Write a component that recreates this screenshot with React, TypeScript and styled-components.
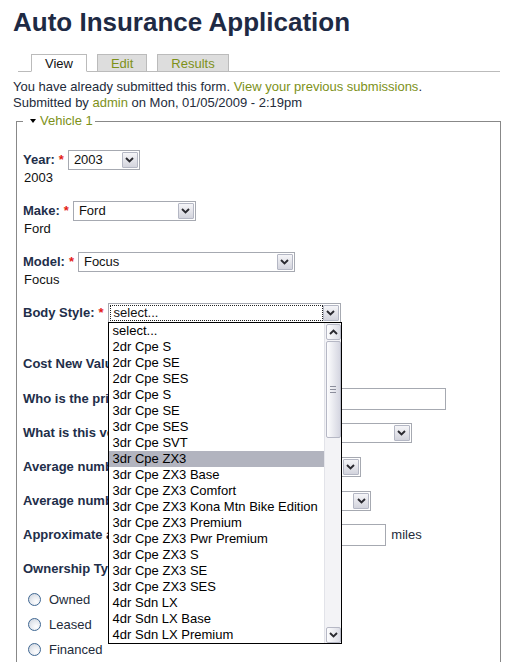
import styled, { createGlobalStyle } from "styled-components";

const GlobalStyle = createGlobalStyle`
  html, body {
    margin: 0;
    padding: 0;
    background: #fff;
    overflow: hidden;
  }
  body {
    font-family: "Liberation Sans", Arial, sans-serif;
    font-size: 13px;
    color: #232b3a;
  }
  * {
    box-sizing: border-box;
  }
`;

const Page = styled.div`
  width: 517px;
  height: 662px;
  overflow: hidden;
  padding: 0 16px 0 13px;
`;

const Title = styled.h1`
  margin: 0;
  padding-top: 7px;
  font-size: 26px;
  line-height: 30px;
  font-weight: bold;
  color: #1e2a44;
`;

const Tabs = styled.ul`
  display: flex;
  gap: 10px;
  margin: 17px 0 0 5px;
  padding: 0 0 0 13px;
  list-style: none;
  border-bottom: 1px solid #bbb;
  width: 482px;
`;

const Tab = styled.li<{ $active?: boolean }>`
  height: 18px;
  margin-bottom: -1px;
  padding: 0 13px;
  line-height: 17px;
  border: 1px solid #bbb;
  border-bottom: 1px solid ${(p) => (p.$active ? "#fff" : "#bbb")};
  background: ${(p) => (p.$active ? "#fff" : "#ddd")};
  color: ${(p) => (p.$active ? "#111" : "#7d9119")};
`;

const Messages = styled.div`
  margin-top: 7px;
  line-height: 16px;
`;

const Link = styled.a`
  color: #7d9119;
  text-decoration: none;
`;

const Fieldset = styled.fieldset`
  margin: 2px 0 0 3px;
  padding: 0 6px 0 6px;
  border: 1px solid #888;
  min-width: 0;
`;

const Legend = styled.legend`
  padding: 0 2px 0 7px;
  line-height: 16px;
  color: #7d9119;
  display: flex;
  align-items: center;
`;

const Caret = styled.span`
  width: 0;
  height: 0;
  margin-right: 4px;
  border-left: 3.5px solid transparent;
  border-right: 3.5px solid transparent;
  border-top: 4px solid #000;
`;

const Fields = styled.div`
  padding-top: 20px;
`;

const FieldBlock = styled.div<{ $gap?: number }>`
  margin-bottom: ${(p) => p.$gap ?? 13}px;
`;

const Row = styled.div`
  display: flex;
  align-items: center;
  height: 21px;
  white-space: nowrap;
`;

const Label = styled.label`
  font-weight: bold;
  color: #222e49;
`;

const Req = styled.span`
  margin-left: 4px;
  color: #e41b17;
  font-weight: bold;
`;

const Value = styled.div`
  height: 16px;
  line-height: 16px;
  padding-left: 1px;
  color: #111;
`;

const SelectWrap = styled.div`
  position: relative;
  margin-left: 4px;
`;

const SelectBox = styled.div<{ $w: number }>`
  display: flex;
  width: ${(p) => p.$w}px;
  height: 20px;
  padding: 1px;
  border: 1px solid #a6a9b1;
  background: #fff;
`;

const SelectText = styled.span<{ $focus?: boolean }>`
  flex: 1;
  padding-left: 4px;
  line-height: 16px;
  color: #111;
  outline: ${(p) => (p.$focus ? "1px dotted #222" : "none")};
  outline-offset: -1px;
`;

const ArrowButton = styled.span`
  width: 16px;
  display: flex;
  align-items: center;
  justify-content: center;
  border: 1px solid #b4b7c4;
  border-radius: 1px;
  background: linear-gradient(#f5f5f8, #d3d4dd);
`;

const TextInput = styled.div<{ $w: number }>`
  width: ${(p) => p.$w}px;
  height: 22px;
  margin-left: 4px;
  border: 1px solid #a6a9b1;
  background: #fff;
`;

const Suffix = styled.span`
  margin-left: 5px;
  color: #232b3a;
`;

const Radios = styled.div`
  margin-top: 8px;
`;

const RadioRow = styled.label`
  display: flex;
  align-items: center;
  height: 25px;
  padding-left: 5px;
  color: #232b3a;
`;

const RadioDot = styled.span`
  width: 13px;
  height: 13px;
  margin-right: 8px;
  border-radius: 50%;
  border: 1px solid #3f6792;
  background: radial-gradient(circle at 65% 70%, #fdfdfe 0%, #e9ecf1 45%, #c9d0da 100%);
`;

const ListBox = styled.div`
  position: absolute;
  left: 0;
  top: 19px;
  z-index: 10;
  display: flex;
  width: 234px;
  height: 322px;
  border: 1px solid #000;
  background: #fff;
`;

const Options = styled.ul`
  flex: 1;
  margin: 0;
  padding: 0;
  list-style: none;
  overflow: hidden;
`;

const Option = styled.li<{ $active?: boolean }>`
  height: 16px;
  line-height: 16px;
  padding-left: 4px;
  white-space: nowrap;
  color: #000;
  background: ${(p) => (p.$active ? "#b2b4bf" : "transparent")};
`;

const ScrollBar = styled.div`
  width: 17px;
  display: flex;
  flex-direction: column;
  padding: 1px 0 0 1px;
  border-left: 1px solid #e2e3e9;
  background: #f3f3f6;
`;

const ScrollButton = styled.span`
  width: 15px;
  height: 16px;
  display: flex;
  align-items: center;
  justify-content: center;
  border: 1px solid #b6b8c5;
  border-radius: 2px;
  background: linear-gradient(90deg, #fdfdfe, #dcdde6);
`;

const Thumb = styled.span`
  width: 15px;
  height: 97px;
  margin-top: 1px;
  display: flex;
  flex-direction: column;
  align-items: center;
  justify-content: center;
  gap: 2px;
  border: 1px solid #b6b8c5;
  border-radius: 2px;
  background: linear-gradient(90deg, #fdfdfe, #d5d6e1);
`;

const Grip = styled.span`
  width: 6px;
  height: 1px;
  background: #8c8e9c;
`;

const TrackFill = styled.span`
  flex: 1;
`;

function Chevron({ up }: { up?: boolean }) {
  return (
    <svg width="9" height="6" viewBox="0 0 9 6">
      <path
        d={up ? "M1 5 L4.5 1.5 L8 5" : "M1 1 L4.5 4.5 L8 1"}
        fill="none"
        stroke="#2a2a30"
        strokeWidth="1.9"
      />
    </svg>
  );
}

function Select({ width, value, focus, children }: { width: number; value: string; focus?: boolean; children?: React.ReactNode }) {
  return (
    <SelectWrap>
      <SelectBox $w={width}>
        <SelectText $focus={focus}>{value}</SelectText>
        <ArrowButton>
          <Chevron />
        </ArrowButton>
      </SelectBox>
      {children}
    </SelectWrap>
  );
}

const bodyStyles = [
  "select...",
  "2dr Cpe S",
  "2dr Cpe SE",
  "2dr Cpe SES",
  "3dr Cpe S",
  "3dr Cpe SE",
  "3dr Cpe SES",
  "3dr Cpe SVT",
  "3dr Cpe ZX3",
  "3dr Cpe ZX3 Base",
  "3dr Cpe ZX3 Comfort",
  "3dr Cpe ZX3 Kona Mtn Bike Edition",
  "3dr Cpe ZX3 Premium",
  "3dr Cpe ZX3 Pwr Premium",
  "3dr Cpe ZX3 S",
  "3dr Cpe ZX3 SE",
  "3dr Cpe ZX3 SES",
  "4dr Sdn LX",
  "4dr Sdn LX Base",
  "4dr Sdn LX Premium",
];

export default function App() {
  return (
    <Page>
      <GlobalStyle />
      <Title>Auto Insurance Application</Title>
      <Tabs>
        <Tab $active>View</Tab>
        <Tab>Edit</Tab>
        <Tab>Results</Tab>
      </Tabs>
      <Messages>
        <div>
          You have already submitted this form. <Link href="#">View your previous submissions</Link>.
        </div>
        <div>
          Submitted by <Link href="#">admin</Link> on Mon, 01/05/2009 - 2:19pm
        </div>
      </Messages>
      <Fieldset>
        <Legend>
          <Caret />
          Vehicle 1
        </Legend>
        <Fields>
          <FieldBlock $gap={14}>
            <Row>
              <Label>Year:</Label>
              <Req>*</Req>
              <Select width={72} value="2003" />
            </Row>
            <Value>2003</Value>
          </FieldBlock>
          <FieldBlock $gap={14}>
            <Row>
              <Label>Make:</Label>
              <Req>*</Req>
              <Select width={123} value="Ford" />
            </Row>
            <Value>Ford</Value>
          </FieldBlock>
          <FieldBlock $gap={14}>
            <Row>
              <Label>Model:</Label>
              <Req>*</Req>
              <Select width={217} value="Focus" />
            </Row>
            <Value>Focus</Value>
          </FieldBlock>
          <FieldBlock $gap={14}>
            <Row>
              <Label>Body Style:</Label>
              <Req>*</Req>
              <Select width={233} value="select..." focus>
                <ListBox>
                  <Options>
                    {bodyStyles.map((s) => (
                      <Option key={s} $active={s === "3dr Cpe ZX3"}>
                        {s}
                      </Option>
                    ))}
                  </Options>
                  <ScrollBar>
                    <ScrollButton>
                      <Chevron up />
                    </ScrollButton>
                    <Thumb>
                      <Grip />
                      <Grip />
                      <Grip />
                    </Thumb>
                    <TrackFill />
                    <ScrollButton>
                      <Chevron />
                    </ScrollButton>
                  </ScrollBar>
                </ListBox>
              </Select>
            </Row>
            <Value />
          </FieldBlock>
          <FieldBlock $gap={14}>
            <Row>
              <Label>Cost New Value:</Label>
              <TextInput $w={100} />
            </Row>
          </FieldBlock>
          <FieldBlock>
            <Row>
              <Label>Who is the primary driver:</Label>
              <TextInput $w={258} />
            </Row>
          </FieldBlock>
          <FieldBlock>
            <Row>
              <Label>What is this vehicle used for:</Label>
              <Select width={205} value="" />
            </Row>
          </FieldBlock>
          <FieldBlock>
            <Row>
              <Label>Average number of miles driven per day:</Label>
              <Select width={82} value="" />
            </Row>
          </FieldBlock>
          <FieldBlock>
            <Row>
              <Label>Average number of days driven per week:</Label>
              <Select width={87} value="" />
            </Row>
          </FieldBlock>
          <FieldBlock>
            <Row>
              <Label>Approximate annual mileage:</Label>
              <TextInput $w={178} />
              <Suffix>miles</Suffix>
            </Row>
          </FieldBlock>
          <FieldBlock $gap={0}>
            <Row>
              <Label>Ownership Type:</Label>
            </Row>
            <Radios>
              <RadioRow>
                <RadioDot />
                Owned
              </RadioRow>
              <RadioRow>
                <RadioDot />
                Leased
              </RadioRow>
              <RadioRow>
                <RadioDot />
                Financed
              </RadioRow>
            </Radios>
          </FieldBlock>
        </Fields>
      </Fieldset>
    </Page>
  );
}
